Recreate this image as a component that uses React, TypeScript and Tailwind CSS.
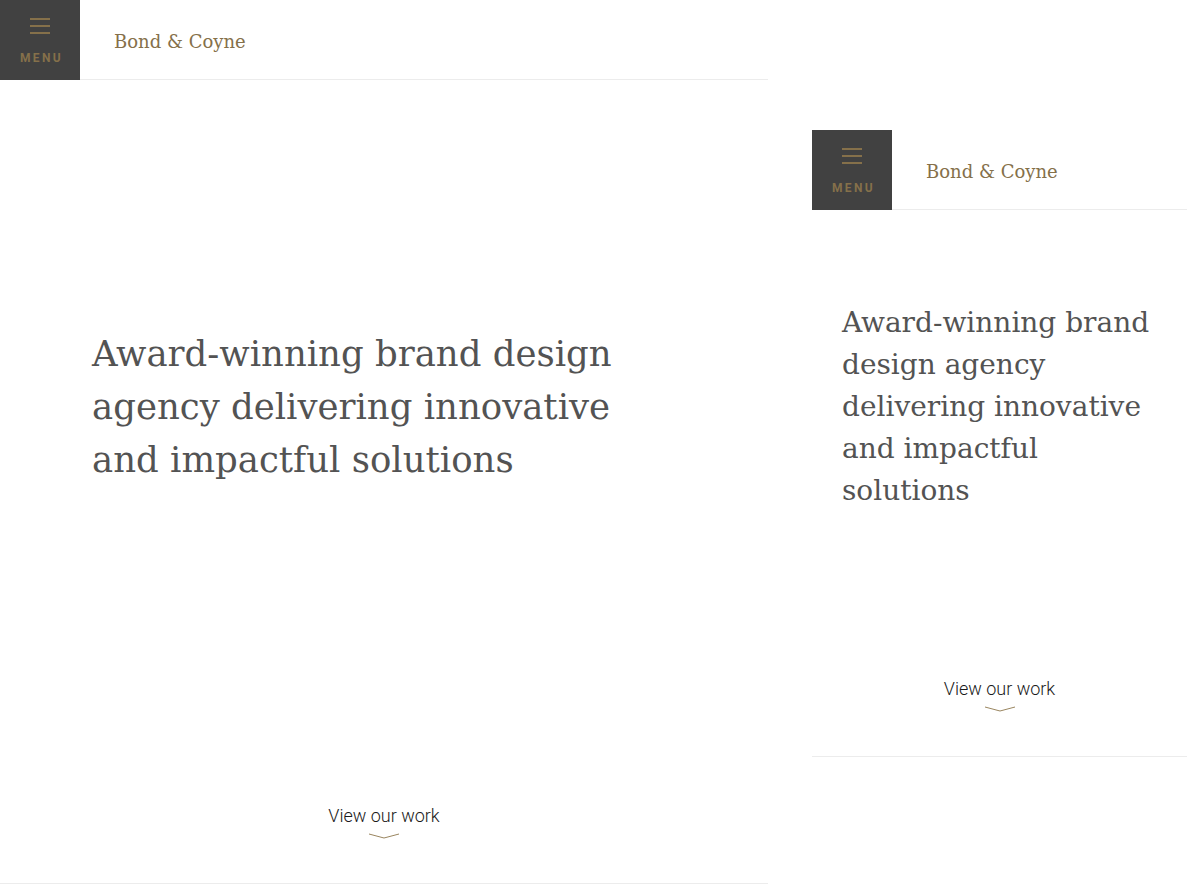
import React from 'react';

const gold = 'text-[#85704a]';

function Header() {
  return (
    <header className="flex h-20 items-stretch border-b border-[#ececec] bg-white">
      <button className="-mb-px flex w-20 flex-col items-center justify-start bg-[#414141] pt-[18px]">
        <span className="flex flex-col gap-[5px]">
          <span className="block h-[2px] w-5 bg-[#85704a]" />
          <span className="block h-[2px] w-5 bg-[#85704a]" />
          <span className="block h-[2px] w-5 bg-[#85704a]" />
        </span>
        <span
          className={`mt-[15px] pl-[3px] text-[12px] font-bold tracking-[0.2em] ${gold}`}
          style={{ fontFamily: 'Roboto, sans-serif' }}
        >
          MENU
        </span>
      </button>
      <div
        className={`flex items-center pl-[34px] pt-[4px] text-[18px] ${gold}`}
        style={{ fontFamily: '"DejaVu Serif", serif' }}
      >
        Bond &amp; Coyne
      </div>
    </header>
  );
}

function ViewWork() {
  return (
    <a className="flex flex-col items-center" href="#">
      <span className="text-[18px] font-light leading-6 text-[#1a1a1a]" style={{ fontFamily: 'Roboto, sans-serif' }}>
        View our work
      </span>
      <svg width="32" height="6" viewBox="0 0 32 6" className="mt-[5px]">
        <polyline points="1,1 16,5 31,1" fill="none" stroke="#9a8660" strokeWidth="1" />
      </svg>
    </a>
  );
}

export default function App() {
  return (
    <div className="flex min-h-[884px] items-start gap-[44px] bg-white">
      {/* desktop */}
      <div className="w-[768px]">
        <Header />
        <section className="flex h-[804px] flex-col border-b border-[#ececec]">
          <h1
            className="mt-[247px] max-w-[640px] pl-[92px] text-[35.5px] font-light leading-[53px] text-[#535353]"
            style={{ fontFamily: '"DejaVu Serif", serif' }}
          >
            Award-winning brand design agency delivering innovative and impactful solutions
          </h1>
          <div className="mt-auto mb-[44px]">
            <ViewWork />
          </div>
        </section>
      </div>

      {/* mobile */}
      <div className="mt-[130px] w-[375px]">
        <Header />
        <section className="flex h-[547px] flex-col border-b border-[#ececec]">
          <h1
            className="mt-[92px] pl-[30px] pr-[25px] text-[28px] font-light leading-[42px] text-[#535353]"
            style={{ fontFamily: '"DejaVu Serif", serif' }}
          >
            Award-winning brand design agency delivering innovative and impactful solutions
          </h1>
          <div className="mt-auto mb-[44px]">
            <ViewWork />
          </div>
        </section>
      </div>
    </div>
  );
}
